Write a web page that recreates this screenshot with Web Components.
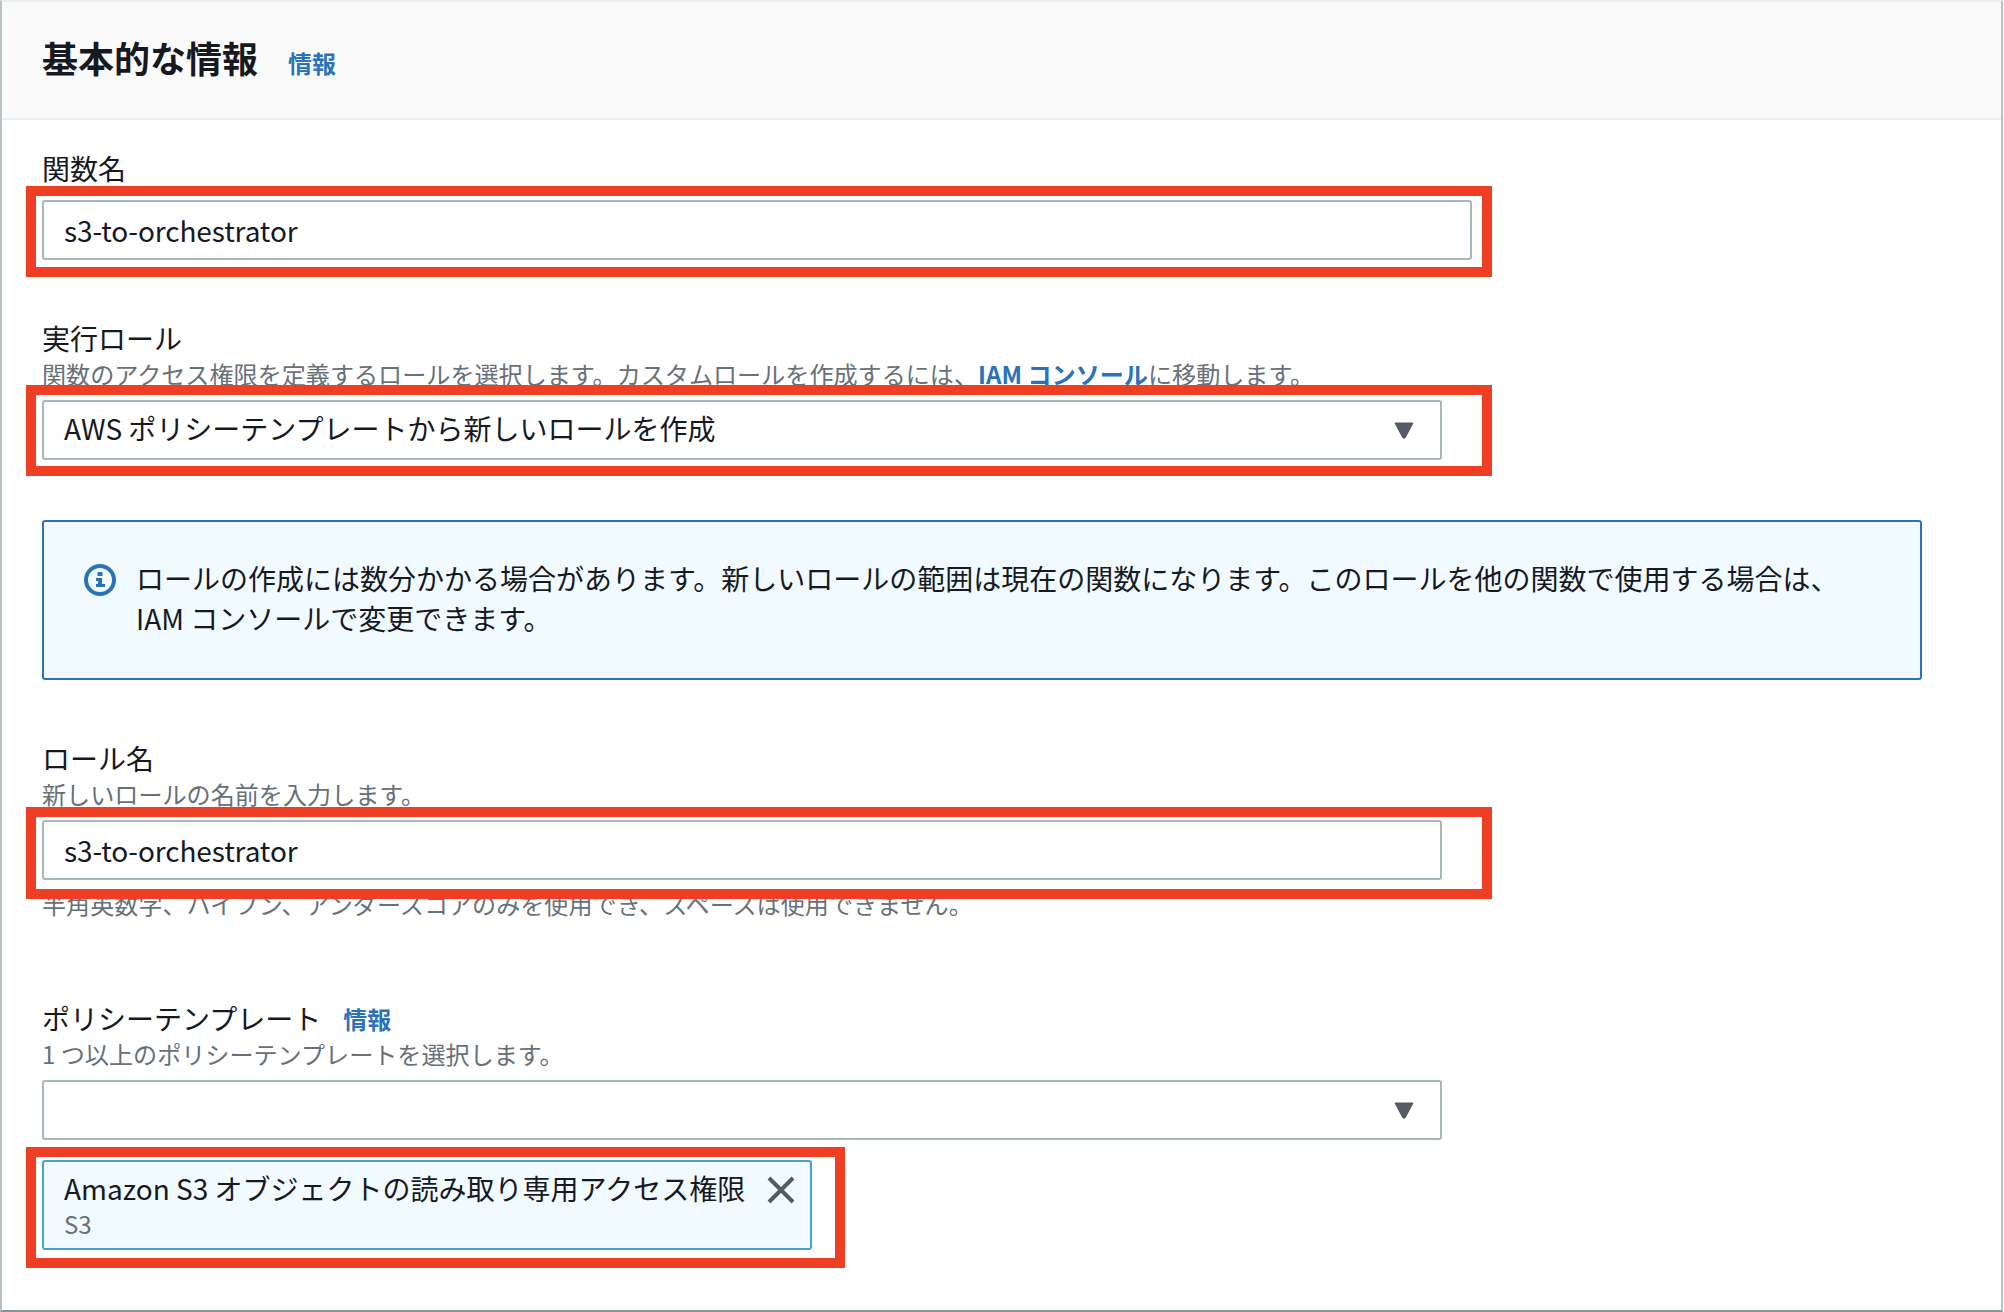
<!DOCTYPE html>
<html lang="ja">
<head>
<meta charset="utf-8">
<title>基本的な情報</title>
<style>
  html, body { margin: 0; background: #fff; }
  body {
    font-family: "Noto Sans CJK JP", sans-serif;
    font-size: 28px;
    color: #16191f;
  }
</style>
</head>
<body>
<aws-panel heading="基本的な情報">
  <form-field label="関数名" style="--gap:12px">
    <mark-box right="20" top="14" bottom="17" style="width:1430px"><text-box value="s3-to-orchestrator"></text-box></mark-box>
  </form-field>

  <form-field label="実行ロール" style="margin-top:62px;--gap:6px">
    <span slot="hint">関数のアクセス権限を定義するロールを選択します。カスタムロールを作成するには、<a-link>IAM コンソール</a-link>に移動します。</span>
    <mark-box right="50" top="15" bottom="16" style="width:1400px"><select-box value="AWS ポリシーテンプレートから新しいロールを作成"></select-box></mark-box>
  </form-field>

  <info-alert style="margin-top:60px">ロールの作成には数分かかる場合があります。新しいロールの範囲は現在の関数になります。このロールを他の関数で使用する場合は、IAM コンソールで変更できます。</info-alert>

  <form-field label="ロール名" style="margin-top:62px;--gap:6px">
    <span slot="hint">新しいロールの名前を入力します。</span>
    <mark-box right="50" top="13" bottom="19" style="width:1400px"><text-box value="s3-to-orchestrator"></text-box></mark-box>
    <span slot="after">半角英数字、ハイフン、アンダースコアのみを使用でき、スペースは使用できません。</span>
  </form-field>

  <form-field label="ポリシーテンプレート" info style="margin-top:78px;--gap:6px">
    <span slot="hint">1 つ以上のポリシーテンプレートを選択します。</span>
    <select-box style="width:1400px"></select-box>
    <mark-box right="33" top="13" bottom="18" style="width:770px;margin-top:20px">
      <policy-token name="Amazon S3 オブジェクトの読み取り専用アクセス権限" service="S3"></policy-token>
    </mark-box>
  </form-field>
</aws-panel>

<script>
class AwsPanel extends HTMLElement {
  constructor() {
    super();
    this.attachShadow({ mode: "open" });
  }

  connectedCallback() {
    this.shadowRoot.innerHTML = `
      <style>
        :host {
          display: block;
          box-sizing: border-box;
          width: 2003px;
          height: 1312px;
          border: 2px solid #b9c3c7;
          border-top-color: #eaeded;
          border-bottom-color: #879596;
        }
        header {
          display: flex;
          align-items: center;
          gap: 30px;
          height: 116px;
          padding-left: 40px;
          background: #fafafa;
          border-bottom: 2px solid #eaeded;
        }
        h2 { margin: 0 0 6px; font-size: 36px; font-weight: 700; line-height: 1; }
        a { padding-top: 4px; font-size: 24px; font-weight: 700; color: #2a73b9; text-decoration: none; }
        main { padding: 32px 79px 0 40px; }
      </style>
      <header><h2>${this.getAttribute("heading")}</h2><a href="#">情報</a></header>
      <main><slot></slot></main>
    `;
  }
}

class FormField extends HTMLElement {
  constructor() {
    super();
    this.attachShadow({ mode: "open" });
  }

  connectedCallback() {
    const info = this.hasAttribute("info") ? `<a href="#">情報</a>` : "";
    this.shadowRoot.innerHTML = `
      <style>
        :host { display: block; }
        .label { display: flex; align-items: center; gap: 22px; box-sizing: border-box; height: 36px; padding-bottom: 4px; line-height: 32px; color: #16191f; }
        a { padding-top: 2px; font-size: 24px; font-weight: 700; color: #2a73b9; text-decoration: none; }
        .hint, .after { height: 36px; font-size: 24.1px; line-height: 32px; color: #687078; }
        .control { padding-top: var(--gap, 7px); }
        .after { margin-top: 8px; }
        .empty { display: none; }
      </style>
      <div class="label"><span>${this.getAttribute("label")}</span>${info}</div>
      <div class="hint ${this.querySelector('[slot="hint"]') ? "" : "empty"}"><slot name="hint"></slot></div>
      <div class="control"><slot></slot></div>
      <div class="after ${this.querySelector('[slot="after"]') ? "" : "empty"}"><slot name="after"></slot></div>
    `;
  }
}

// red annotation frame, drawn over whatever sits around the control
class MarkBox extends HTMLElement {
  constructor() {
    super();
    this.attachShadow({ mode: "open" });
  }

  connectedCallback() {
    const top = this.getAttribute("top");
    const right = this.getAttribute("right");
    const bottom = this.getAttribute("bottom");
    this.shadowRoot.innerHTML = `
      <style>
        :host { display: block; position: relative; }
        .frame {
          position: absolute;
          z-index: 2;
          top: -${top}px;
          right: -${right}px;
          bottom: -${bottom}px;
          left: -16px;
          border: 10px solid #ee3f24;
          pointer-events: none;
        }
      </style>
      <slot></slot>
      <div class="frame"></div>
    `;
  }
}

class TextBox extends HTMLElement {
  constructor() {
    super();
    this.attachShadow({ mode: "open" });
  }

  connectedCallback() {
    this.shadowRoot.innerHTML = `
      <style>
        :host {
          display: flex;
          align-items: center;
          box-sizing: border-box;
          height: 60px;
          padding: 0 20px;
          background: #fff;
          border: 2px solid #aab7b8;
          border-radius: 3px;
          color: #16191f;
          letter-spacing: -0.1px;
        }
      </style>
      <span>${this.getAttribute("value")}</span>
    `;
  }
}

class SelectBox extends HTMLElement {
  constructor() {
    super();
    this.attachShadow({ mode: "open" });
  }

  connectedCallback() {
    this.shadowRoot.innerHTML = `
      <style>
        :host {
          display: flex;
          align-items: center;
          justify-content: space-between;
          box-sizing: border-box;
          height: 60px;
          padding: 0 25px 0 20px;
          background: #fff;
          border: 2px solid #aab7b8;
          border-radius: 3px;
          color: #16191f;
        }
        span { padding-bottom: 4px; }
        svg { display: block; width: 22px; height: 17px; }
      </style>
      <span>${this.getAttribute("value") || ""}</span>
      <svg viewBox="0 0 22 17"><path d="M2 1h18l-7.6 14.4a1.6 1.6 0 0 1-2.8 0z" fill="#545b64" stroke="#545b64" stroke-width="1" stroke-linejoin="round"/></svg>
    `;
  }
}

class InfoAlert extends HTMLElement {
  constructor() {
    super();
    this.attachShadow({ mode: "open" });
  }

  connectedCallback() {
    this.shadowRoot.innerHTML = `
      <style>
        :host {
          display: flex;
          gap: 20px;
          box-sizing: border-box;
          height: 160px;
          padding: 36px 70px 0 40px;
          background: #f1faff;
          border: 2px solid #2a73b9;
          border-radius: 3px;
          line-height: 40px;
          color: #16191f;
        }
        svg { flex: none; display: block; width: 32px; height: 32px; margin-top: 6px; }
      </style>
      <svg viewBox="0 0 32 32">
        <circle cx="16" cy="16" r="14" fill="none" stroke="#2a73b9" stroke-width="4"/>
        <path d="M13.5 8h5v4h-5zM12 14h6v6h3v3h-9v-3h2v-3h-2z" fill="#2a73b9"/>
      </svg>
      <div><slot></slot></div>
    `;
  }
}

class PolicyToken extends HTMLElement {
  constructor() {
    super();
    this.attachShadow({ mode: "open" });
  }

  connectedCallback() {
    this.shadowRoot.innerHTML = `
      <style>
        :host {
          display: flex;
          justify-content: space-between;
          box-sizing: border-box;
          height: 90px;
          padding: 6px 15px 0 20px;
          background: #f1faff;
          border: 2px solid #44a3c9;
          border-radius: 3px;
        }
        .name { line-height: 40px; color: #16191f; }
        .service { font-size: 24px; line-height: 32px; color: #687078; }
        svg { flex: none; display: block; width: 28px; height: 28px; margin-top: 8px; }
      </style>
      <div>
        <div class="name">${this.getAttribute("name")}</div>
        <div class="service">${this.getAttribute("service")}</div>
      </div>
      <svg viewBox="0 0 28 28"><path d="M2 2l24 24M26 2L2 26" fill="none" stroke="#545b64" stroke-width="4"/></svg>
    `;
  }
}

class ALink extends HTMLElement {
  constructor() {
    super();
    this.attachShadow({ mode: "open" });
    this.shadowRoot.innerHTML = `<style>:host { display: inline; color: #2a73b9; font-weight: 700; }</style><slot></slot>`;
  }
}

customElements.define("aws-panel", AwsPanel);
customElements.define("form-field", FormField);
customElements.define("mark-box", MarkBox);
customElements.define("text-box", TextBox);
customElements.define("select-box", SelectBox);
customElements.define("info-alert", InfoAlert);
customElements.define("policy-token", PolicyToken);
customElements.define("a-link", ALink);
</script>
</body>
</html>
